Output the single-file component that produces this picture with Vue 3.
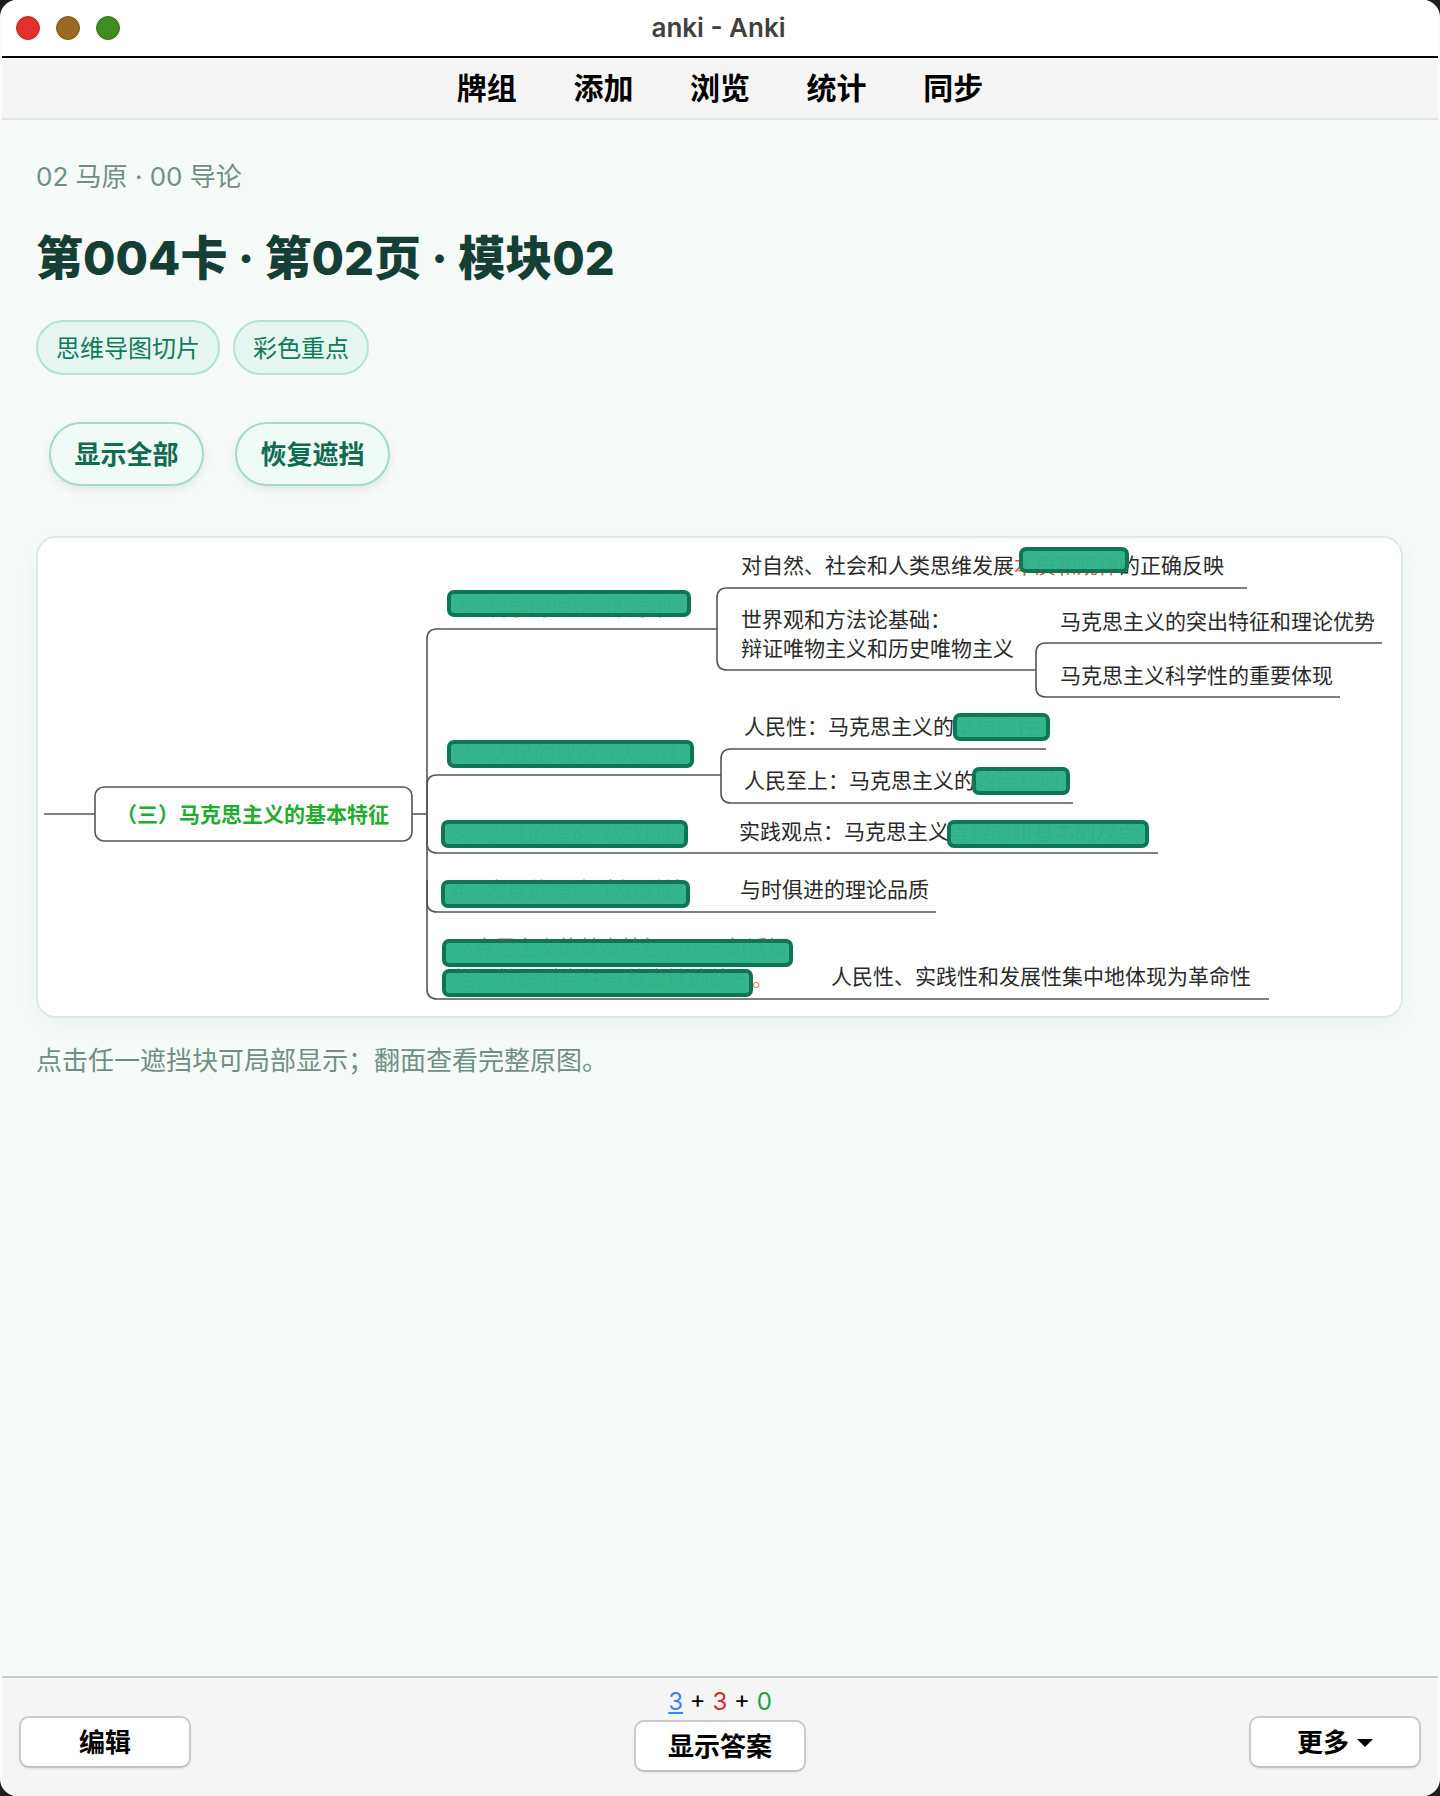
<script setup>
const navItems = ['牌组', '添加', '浏览', '统计', '同步']
const tags = ['思维导图切片', '彩色重点']
const actions = ['显示全部', '恢复遮挡']

const connectors = [
  'M44 814H95',
  'M412 814H427',
  'M717 629H437Q427 629 427 639V989Q427 999 437 999H1269',
  'M721 775H437Q427 775 427 785V843Q427 853 437 853H1158',
  'M427 880V902Q427 912 437 912H936',
  'M1247 588H727Q717 588 717 598V660Q717 670 727 670H1036',
  'M1382 643H1046Q1036 643 1036 653V687Q1036 697 1046 697H1340',
  'M1046 749H731Q721 749 721 759V793Q721 803 731 803H1073'
]

const labels = [
  { x: 741, y: 573, text: '对自然、社会和人类思维发展', tail: '本质和规律', end: '的正确反映' },
  { x: 741, y: 627, text: '世界观和方法论基础：' },
  { x: 741, y: 656, text: '辩证唯物主义和历史唯物主义' },
  { x: 1060, y: 629, text: '马克思主义的突出特征和理论优势' },
  { x: 1060, y: 683, text: '马克思主义科学性的重要体现' },
  { x: 744, y: 734, text: '人民性：马克思主义的', tail: '本质属性' },
  { x: 744, y: 788, text: '人民至上：马克思主义的', tail: '政治立场' },
  { x: 739, y: 839, text: '实践观点：马克思主义', tail: '首要的和基本的观点' },
  { x: 740, y: 897, text: '与时俱进的理论品质' },
  { x: 831, y: 984, text: '人民性、实践性和发展性集中地体现为革命性' }
]

const hidden = [
  { x: 458, y: 615, text: '1、科学的理论（科学性）' },
  { x: 458, y: 761, text: '2、人民的理论（人民性）' },
  { x: 452, y: 841, text: '3、实践的理论（实践性）' },
  { x: 452, y: 897, text: '4、发展的理论（发展性）' },
  { x: 453, y: 955, text: '马克思主义的基本特征，用一句话概' },
  { x: 454, y: 986, text: '括，就是科学性与革命性的统一。', wide: true }
]

const masks = [
  { x: 1019, y: 547, w: 110, h: 26 },
  { x: 447, y: 590, w: 244, h: 27 },
  { x: 953, y: 713, w: 97, h: 28 },
  { x: 447, y: 740, w: 247, h: 28 },
  { x: 972, y: 767, w: 98, h: 28 },
  { x: 441, y: 820, w: 247, h: 28 },
  { x: 947, y: 820, w: 202, h: 28 },
  { x: 441, y: 880, w: 249, h: 28 },
  { x: 442, y: 939, w: 351, h: 28 },
  { x: 442, y: 969, w: 311, h: 28 }
]
</script>

<template>
  <div class="window">
    <header class="titlebar">
      <div class="lights">
        <span class="light red"></span>
        <span class="light amber"></span>
        <span class="light green"></span>
      </div>
      <div class="title">anki - Anki</div>
    </header>

    <nav class="nav">
      <span v-for="item in navItems" :key="item">{{ item }}</span>
    </nav>

    <main class="content">
      <div class="crumb">02 马原 · 00 导论</div>
      <h1 class="heading">第004卡 · 第02页 · 模块02</h1>
      <div class="tags">
        <span v-for="tag in tags" :key="tag" class="tag">{{ tag }}</span>
      </div>
      <div class="actions">
        <button v-for="action in actions" :key="action" class="action">{{ action }}</button>
      </div>

      <section class="card">
        <svg class="map" viewBox="38 538 1363 478" width="1363" height="478">
          <path v-for="d in connectors" :key="d" class="link" :d="d" />
          <rect class="node" x="95" y="787" width="317" height="54" rx="9" />
          <text class="node-text" x="116" y="822">（三）马克思主义的基本特征</text>
          <text v-for="l in labels" :key="l.text" class="label" :x="l.x" :y="l.y">{{ l.text }}<tspan v-if="l.tail" class="red">{{ l.tail }}</tspan><tspan v-if="l.end">{{ l.end }}</tspan></text>
          <text v-for="h in hidden" :key="h.text" class="label red faded" :class="{ wide: h.wide }" :x="h.x" :y="h.y">{{ h.text }}</text>
          <rect v-for="m in masks" :key="m.x + '-' + m.y" class="mask" :x="m.x + 2" :y="m.y + 2" :width="m.w - 4" :height="m.h - 4" rx="5" />
        </svg>
      </section>

      <p class="hint">点击任一遮挡块可局部显示；翻面查看完整原图。</p>
    </main>

    <footer class="bottom">
      <div class="side">
        <button class="btn">编辑</button>
      </div>
      <div class="center">
        <div class="counts"><u class="blue">3</u> + <span class="redc">3</span> + <span class="greenc">0</span></div>
        <button class="btn">显示答案</button>
      </div>
      <div class="side right">
        <button class="btn">更多<i class="caret"></i></button>
      </div>
    </footer>
  </div>
</template>

<style>
html, body { margin: 0; background: #1e1e1e; }
</style>

<style scoped>
.window {
  width: 1440px;
  height: 1796px;
  box-sizing: border-box;
  display: flex;
  flex-direction: column;
  overflow: hidden;
  border-radius: 17px;
  border-left: 2px solid #fbfbfb;
  border-right: 2px solid #fbfbfb;
  background: #f6faf8;
  font-family: Inter, "Noto Sans CJK SC", sans-serif;
}
.titlebar {
  height: 56px;
  flex: none;
  display: grid;
  grid-template-columns: 1fr auto 1fr;
  align-items: center;
  padding: 0 14px;
  background: #fff;
  border-bottom: 2px solid #000;
}
.lights { display: flex; gap: 16px; }
.light {
  width: 24px;
  height: 24px;
  border-radius: 50%;
  box-sizing: border-box;
  border: 1px solid;
}
.red { background: #e2302a; border-color: #c72a24; }
.amber { background: #976b22; border-color: #7f5a1d; }
.green { background: #3f8c24; border-color: #35761e; }
.title {
  padding-bottom: 2px;
  margin-left: -3px;
  font-size: 26px;
  font-weight: 600;
  color: #404040;
}
.nav {
  height: 56px;
  flex: none;
  padding-bottom: 4px;
  display: flex;
  justify-content: center;
  align-items: center;
  gap: 56.6px;
  background: #f5f5f5;
  border-bottom: 2px solid #e4e4e4;
  font-size: 30px;
  font-weight: 700;
  color: #000;
}
.content {
  flex: 1;
  min-height: 0;
  padding: 40px 35px 0 34px;
}
.crumb {
  font-size: 26px;
  line-height: 34px;
  color: #6f8f85;
}
.heading {
  margin: 34px 0 0;
  font-size: 47px;
  line-height: 60px;
  font-weight: 800;
  color: #153f35;
}
.tags {
  margin-top: 32px;
  display: flex;
  gap: 13px;
}
.tag {
  height: 55px;
  box-sizing: border-box;
  padding: 0 18px 3px;
  display: flex;
  align-items: center;
  border: 2px solid #b5e3d1;
  border-radius: 28px;
  background: #e6f6f0;
  font-size: 24px;
  color: #0f7a5c;
}
.actions {
  margin-top: 47px;
  padding-left: 13px;
  display: flex;
  gap: 31px;
}
.action {
  width: 155px;
  height: 64px;
  box-sizing: border-box;
  padding: 0 0 4px;
  border: 2px solid #a6dac5;
  border-radius: 32px;
  background: #f0faf6;
  box-shadow: 0 4px 10px rgba(20, 90, 70, 0.1);
  font: 600 26px Inter, "Noto Sans CJK SC", sans-serif;
  color: #0f6b52;
}
.card {
  margin-top: 50px;
  height: 482px;
  box-sizing: border-box;
  border: 2px solid #dcebe6;
  border-radius: 20px;
  background: #fff;
  box-shadow: 0 8px 20px rgba(20, 90, 70, 0.05);
  overflow: hidden;
}
.map { display: block; }
.link { fill: none; stroke: #555; stroke-width: 1.6; }
.node { fill: #fff; stroke: #555; stroke-width: 1.6; }
.node-text { font-size: 21px; font-weight: 700; fill: #22ab2f; }
.label { font-size: 21px; fill: #2a2a2a; }
.label.red, .label .red { fill: #e9503c; }
.faded { fill-opacity: 0.8; }
.wide { letter-spacing: 0.3px; }
.mask {
  fill: #2cb287;
  stroke: #0e7558;
  stroke-width: 4;
  fill-opacity: 0.96;
}
.hint {
  margin: 25px 0 0;
  font-size: 26px;
  line-height: 36px;
  color: #6f8f85;
}
.bottom {
  height: 118px;
  flex: none;
  display: grid;
  grid-template-columns: 1fr auto 1fr;
  padding: 0 17px;
  background: #f5f5f5;
  border-top: 2px solid #c9c9c9;
}
.side { padding-top: 38px; }
.right { display: flex; justify-content: flex-end; }
.center {
  padding-top: 9px;
  display: flex;
  flex-direction: column;
  align-items: center;
}
.counts {
  height: 33px;
  font-size: 24px;
  line-height: 30px;
  color: #000;
}
.blue { color: #3b82f6; }
.redc { color: #dc2626; }
.greenc { color: #16a34a; }
.btn {
  width: 172px;
  height: 52px;
  box-sizing: border-box;
  padding: 0 0 3px;
  display: flex;
  align-items: center;
  justify-content: center;
  border: 2px solid #cbcbcb;
  border-bottom-color: #c2c2c2;
  border-radius: 10px;
  background: #fff;
  box-shadow: 0 1px 2px rgba(0, 0, 0, 0.08);
  font: 700 26px Inter, "Noto Sans CJK SC", sans-serif;
  color: #000;
}
.caret {
  margin: 4px 0 0 8px;
  width: 0;
  height: 0;
  border-left: 8px solid transparent;
  border-right: 8px solid transparent;
  border-top: 8px solid #000;
}
</style>
